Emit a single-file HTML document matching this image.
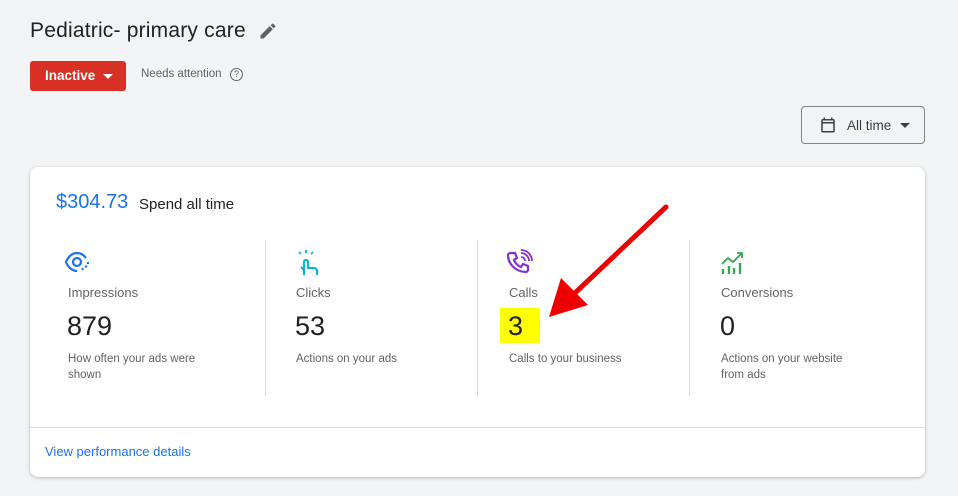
<!DOCTYPE html>
<html><head><style>
body{margin:0;width:958px;height:496px;background:#f1f3f4;font-family:"Liberation Sans",sans-serif;position:relative;overflow:hidden;color:#202124}
.a{position:absolute}
.card{left:30px;top:167px;width:895px;height:310px;background:#fff;border-radius:8px;box-shadow:0 1px 3px rgba(0,0,0,.25)}
.lbl{font-size:13px;color:#5f6368}
.num{font-size:27px;color:#202124}
.desc{font-size:11.5px;color:#5f6368;line-height:16px}
.vl{width:1px;height:156px;background:#dadce0;top:240px}
</style></head><body>
<div class="a" style="left:30px;top:19px;font-size:21px;color:#202124;letter-spacing:0.2px">Pediatric- primary care</div>
<svg class="a" style="left:258px;top:21px" width="20" height="20" viewBox="0 0 24 24"><path d="M3 17.25V21h3.75L17.8 9.94l-3.75-3.75L3 17.25zM20.7 7.04a1 1 0 000-1.41l-2.34-2.34a1 1 0 00-1.41 0l-1.83 1.83 3.75 3.75 1.83-1.83z" fill="#5f6368"/></svg>
<div class="a" style="left:30px;top:61px;width:96px;height:30px;background:#d93025;border-radius:3px;color:#fff;font-weight:bold;font-size:13.5px;line-height:30px;text-indent:15px">Inactive <span style="display:inline-block;border-left:5px solid transparent;border-right:5px solid transparent;border-top:5px solid #fff;vertical-align:middle;margin-left:4px;text-indent:0"></span></div>
<div class="a" style="left:141px;top:68px;font-size:11.5px;color:#5f6368">Needs attention</div>
<div class="a" style="left:230px;top:68px;width:11px;height:11px;border:1.3px solid #5f6368;border-radius:50%;font-size:9px;line-height:11px;text-align:center;color:#5f6368">?</div>
<div class="a" style="left:801px;top:106px;width:122px;height:36px;border:1px solid #80868b;border-radius:4px;background:#f1f3f4"></div>
<svg class="a" style="left:819px;top:116px" width="18" height="18" viewBox="0 0 24 24"><path d="M19 4h-1V2h-2v2H8V2H6v2H5a2 2 0 00-2 2v14a2 2 0 002 2h14a2 2 0 002-2V6a2 2 0 00-2-2zm0 16H5V10h14v10zm0-12H5V6h14v2z" fill="#3c4043"/></svg>
<div class="a" style="left:847px;top:118px;font-size:13.5px;color:#3c4043">All time</div>
<div class="a" style="left:900px;top:123px;border-left:5px solid transparent;border-right:5px solid transparent;border-top:5px solid #3c4043"></div>
<div class="a card"></div>
<div class="a" style="left:56px;top:191px;font-size:20px;color:#1a73e8">$304.73</div>
<div class="a" style="left:139px;top:196px;font-size:15px;color:#202124">Spend all time</div>
<svg class="a" style="left:64px;top:250px" width="28" height="24" viewBox="0 0 28 24"><path d="M22 8C19 4 16 3 13 3 8 3 4 7 2 12c2 5 6 9 11 9" fill="none" stroke="#1a73e8" stroke-width="2.2"/><circle cx="13" cy="12" r="4" fill="none" stroke="#1a73e8" stroke-width="2.2"/><path d="M18 18l1 2M21 16l2 1M23 13h2" stroke="#1a73e8" stroke-width="2"/></svg>
<svg class="a" style="left:296px;top:249px" width="24" height="28" viewBox="0 0 24 28"><path d="M8 26V13a2 2 0 014 0v6h6a3 3 0 013 3v4M8 21l-3-3" fill="none" stroke="#12b5cb" stroke-width="2.2"/><path d="M3 3l2 2M10 1v3M17 3l-2 2" stroke="#12b5cb" stroke-width="1.8"/></svg>
<svg class="a" style="left:505px;top:249px" width="28" height="28" viewBox="0 0 28 28"><path d="M6 4l4 0 2 5-3 2c1 3 4 6 7 7l2-3 5 2v4c0 1-1 2-2 2C11 23 3 15 3 6c0-1 1-2 3-2z" fill="none" stroke="#8430ce" stroke-width="2.2"/><path d="M16 8a4 4 0 014 4M16 4a8 8 0 018 8M16 1a11 11 0 0111 11" fill="none" stroke="#8430ce" stroke-width="1.8"/></svg>
<svg class="a" style="left:720px;top:250px" width="24" height="26" viewBox="0 0 24 26"><path d="M2 14l6-6 5 4 8-8" fill="none" stroke="#34a853" stroke-width="1.8"/><path d="M17 3h5v5" fill="none" stroke="#34a853" stroke-width="1.8"/><path d="M3 19v5M9 16v8M14 18v6M20 13v11" stroke="#34a853" stroke-width="2.4"/></svg>
<div class="a lbl" style="left:68px;top:285px">Impressions</div>
<div class="a lbl" style="left:296px;top:285px">Clicks</div>
<div class="a lbl" style="left:509px;top:285px">Calls</div>
<div class="a lbl" style="left:721px;top:285px">Conversions</div>
<div class="a" style="left:500px;top:308px;width:40px;height:35px;background:#ffff00"></div>
<div class="a num" style="left:67px;top:311px">879</div>
<div class="a num" style="left:295px;top:311px">53</div>
<div class="a num" style="left:508px;top:311px">3</div>
<div class="a num" style="left:720px;top:311px">0</div>
<div class="a desc" style="left:68px;top:351px;width:150px">How often your ads were shown</div>
<div class="a desc" style="left:296px;top:351px">Actions on your ads</div>
<div class="a desc" style="left:509px;top:351px">Calls to your business</div>
<div class="a desc" style="left:721px;top:351px;width:140px">Actions on your website from ads</div>
<div class="a vl" style="left:265px"></div>
<div class="a vl" style="left:477px"></div>
<div class="a vl" style="left:689px"></div>
<div class="a" style="left:30px;top:427px;width:895px;height:1px;background:#dadce0"></div>
<div class="a" style="left:45px;top:444px;font-size:13px;color:#1a73e8">View performance details</div>
<svg class="a" style="left:0;top:0" width="958" height="496"><line x1="666" y1="207" x2="575" y2="293" stroke="#ee0000" stroke-width="5" stroke-linecap="round"/><polygon points="549,317 561,278 588,305" fill="#ee0000"/></svg>
</body></html>
